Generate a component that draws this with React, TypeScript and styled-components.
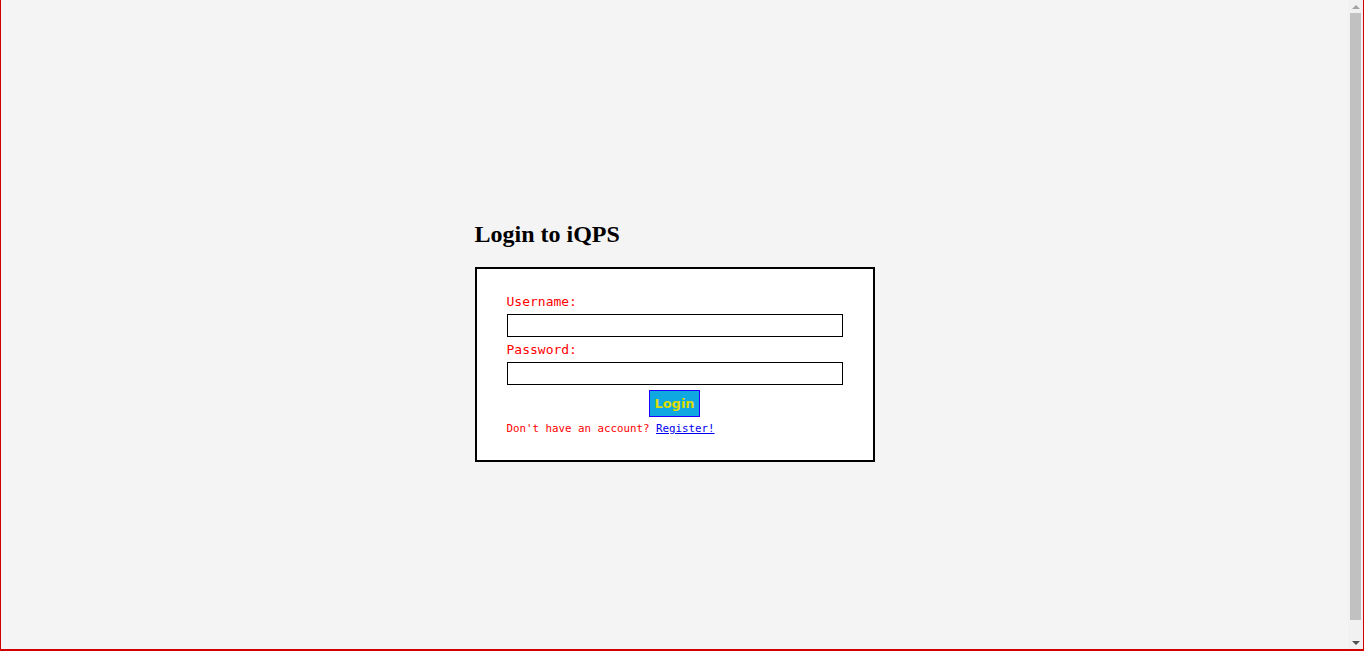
import styled, {createGlobalStyle} from 'styled-components';

const GlobalStyle = createGlobalStyle`
	html, body {
		margin: 0;
		padding: 0;
		height: 100%;
		overflow: hidden;
	}
	#root {
		height: 100%;
	}
`;

const Frame = styled.div`
	box-sizing: border-box;
	display: flex;
	height: 100vh;
	border-left: 1px solid #d00000;
	border-right: 1px solid #d00000;
	border-bottom: 2px solid #d00000;
	background-color: #f4f4f4;
`;

const Viewport = styled.div`
	flex: 1;
	overflow: hidden;
`;

const Page = styled.div`
	box-sizing: border-box;
	min-height: 669px;
	display: flex;
	justify-content: center;
	padding-top: 220px;
`;

const ScrollBar = styled.div`
	display: flex;
	flex-direction: column;
	flex: 0 0 15px;
	background-color: #f1f1f1;
`;

const Arrow = styled.div`
	display: flex;
	align-items: center;
	justify-content: center;
	height: 13px;

	& svg {
		width: 8px;
		height: 4px;
	}
`;

const Track = styled.div`
	flex: 1;
	display: flex;
	flex-direction: column;
	padding: 0 2px;
`;

const Thumb = styled.div`
	flex: 0 0 607px;
	background-color: #c1c1c1;
`;

const Wrapper = styled.div`
	width: 400px;
`;

const Title = styled.h2`
	margin: 0 0 19px;
	font-family: 'Liberation Serif', 'Times New Roman', serif;
	font-size: 24px;
	font-weight: 700;
	line-height: 28px;
	color: #000;
`;

const Card = styled.form`
	box-sizing: border-box;
	display: flex;
	flex-direction: column;
	width: 400px;
	height: 195px;
	padding: 25px 30px 0;
	border: 2px solid #000;
	background-color: #fff;
	font-family: 'DejaVu Sans Mono', monospace;
`;

const Label = styled.label`
	display: block;
	font-size: 13px;
	line-height: 15px;
	color: #ff0000;
	margin-bottom: 5px;
`;

const Input = styled.input`
	box-sizing: border-box;
	width: 100%;
	height: 23px;
	margin: 0 0 5px;
	padding: 0 4px;
	border: 1px solid #000;
	background: #fff;
	outline: none;
`;

const Actions = styled.div`
	display: flex;
	justify-content: center;
	margin-bottom: 4px;
`;

const Button = styled.button`
	box-sizing: border-box;
	width: 51px;
	height: 27px;
	padding: 0;
	border: 1px solid #2200ff;
	background-color: #10a8e0;
	color: #dcdc00;
	font-family: 'DejaVu Sans', sans-serif;
	font-size: 13px;
	font-weight: 700;
	cursor: pointer;
`;

const Hint = styled.p`
	margin: 0;
	font-size: 10.8px;
	line-height: 15px;
	color: #ff0000;

	& a {
		color: #0000ee;
	}
`;

export default function App() {
	return (
		<>
			<GlobalStyle />
			<Frame>
				<Viewport>
					<Page>
						<Wrapper>
							<Title>Login to iQPS</Title>
							<Card onSubmit={e => e.preventDefault()}>
								<Label htmlFor="username">Username:</Label>
								<Input id="username" type="text" />
								<Label htmlFor="password">Password:</Label>
								<Input id="password" type="password" />
								<Actions>
									<Button type="submit">Login</Button>
								</Actions>
								<Hint>
									Don't have an account? <a href="#">Register!</a>
								</Hint>
							</Card>
						</Wrapper>
					</Page>
				</Viewport>
				<ScrollBar>
					<Arrow>
						<svg viewBox="0 0 8 4">
							<path d="M0 4 L4 0 L8 4 Z" fill="#a3a3a3" />
						</svg>
					</Arrow>
					<Track>
						<Thumb />
					</Track>
					<Arrow>
						<svg viewBox="0 0 8 4">
							<path d="M0 0 L8 0 L4 4 Z" fill="#505050" />
						</svg>
					</Arrow>
				</ScrollBar>
			</Frame>
		</>
	);
}
